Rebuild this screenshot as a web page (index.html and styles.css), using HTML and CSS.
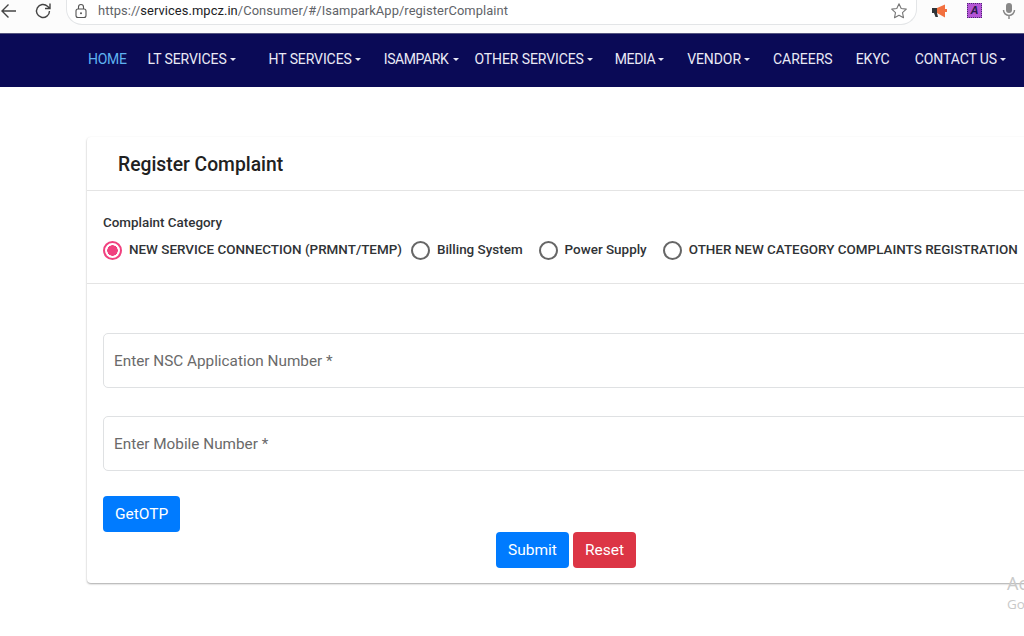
FILE: index.html
```html
<!DOCTYPE html>
<html lang="en">
<head>
<meta charset="utf-8">
<title>Register Complaint</title>
<link rel="stylesheet" href="styles.css">
</head>
<body>
<header class="toolbar">
  <svg class="tool-back" width="20" height="20" viewBox="0 0 20 20"><path d="M17 10H3M9.500 3.500 3 10l6.500 6.500" fill="none" stroke="#444" stroke-width="1.400"/></svg>
  <svg class="tool-reload" width="20" height="20" viewBox="0 0 20 20"><path d="M16.500 10a6.500 6.500 0 1 1-2-4.700L17 7.500M17 2.500v5h-5" fill="none" stroke="#444" stroke-width="1.400"/></svg>
  <div class="omnibox">
    <svg class="lock" width="14" height="16" viewBox="0 0 14 16"><rect x="2" y="6" width="10" height="8.500" rx="2" fill="none" stroke="#555" stroke-width="1.100"/><path d="M4.500 6V4a2.500 2.500 0 0 1 5 0v2" fill="none" stroke="#555" stroke-width="1.100"/><circle cx="7" cy="10.200" r="1" fill="#555"/></svg>
    <span class="url">https://<b>services.mpcz.in</b>/Consumer/#/IsamparkApp/registerComplaint</span>
    <svg class="star" width="18" height="18" viewBox="0 0 18 18"><path d="M9 1.800l2.200 4.700 5.100.6-3.800 3.500 1 5.100L9 13.200l-4.500 2.500 1-5.100-3.800-3.500 5.100-.6z" fill="none" stroke="#777" stroke-width="1.100" stroke-linejoin="round"/></svg>
  </div>
  <svg class="ext-horn" width="18" height="16" viewBox="0 0 18 16"><path d="M1 5h5v5H1z" fill="#2f3438"/><path d="M3 10h3l1 4H4.500z" fill="#2f3438"/><path d="M6 5l8-3.500v13L6 10z" fill="#f2703f"/><rect x="14" y="6" width="2" height="3" fill="#f2703f"/></svg>
  <div class="ext-a">A</div>
  <svg class="ext-mic" width="14" height="18" viewBox="0 0 14 18"><rect x="4" y="1" width="6" height="10" rx="3" fill="#888"/><path d="M1.500 8a5.500 5.500 0 0 0 11 0M7 13.500V17" fill="none" stroke="#888" stroke-width="1.500"/></svg>
</header>

<nav class="navbar">
  <a class="nav-link active">HOME</a>
  <a class="nav-link drop w-lt">LT SERVICES</a>
  <a class="nav-link drop">HT SERVICES</a>
  <a class="nav-link drop w-isam">ISAMPARK</a>
  <a class="nav-link drop">OTHER SERVICES</a>
  <a class="nav-link drop tight">MEDIA</a>
  <a class="nav-link drop">VENDOR</a>
  <a class="nav-link open">CAREERS</a>
  <a class="nav-link open">EKYC</a>
  <a class="nav-link drop w-contact">CONTACT US</a>
</nav>

<main class="card">
  <h1 class="card-title">Register Complaint</h1>
  <section class="category">
    <div class="category-label">Complaint Category</div>
    <div class="radios">
      <label class="radio checked">NEW SERVICE CONNECTION (PRMNT/TEMP)</label>
      <label class="radio">Billing System</label>
      <label class="radio">Power Supply</label>
      <label class="radio">OTHER NEW CATEGORY COMPLAINTS REGISTRATION</label>
    </div>
  </section>
  <form class="form">
    <div class="field">Enter NSC Application Number *</div>
    <div class="field">Enter Mobile Number *</div>
    <div class="otp-row"><button type="button" class="btn blue">GetOTP</button></div>
    <div class="actions">
      <button type="button" class="btn blue">Submit</button>
      <button type="button" class="btn red">Reset</button>
    </div>
  </form>
</main>

<div class="watermark"><div class="wm-1">Activate Windows</div><div class="wm-2">Go to Settings</div></div>
</body>
</html>
```
FILE: styles.css
```css
*, *::before, *::after { box-sizing: border-box; }
html, body { margin: 0; height: 636px; overflow: hidden; background: #fff; }
body { font-family: Roboto, "Liberation Sans", sans-serif; color: #212529; width: 1024px; position: relative; }

.toolbar { height: 33px; display: flex; align-items: flex-start; background: #fcfcfc; }
.tool-back { margin: 1px 0 0 -1px; }
.tool-reload { margin: 1px 0 0 14px; }
.omnibox { width: 851px; height: 25px; margin: 0 0 0 13px; padding: 0 8px 3px 7px; display: flex; align-items: center; border: 1px solid #e3e5e7; border-top: 0; border-radius: 0 0 16px 16px; background: #fff; }
.lock { margin-right: 10px; }
.url { flex: 1; font-size: 12.900px; color: #5f6368; letter-spacing: .07px; white-space: nowrap; }
.url b { font-weight: 400; color: #202124; }
.ext-horn { margin: 3px 0 0 14px; }
.ext-a { width: 15px; height: 15px; margin: 3px 0 0 18px; background: #b455d6; border: 1px dotted #4b2a70; color: #2a1a4a; font: italic 700 11px/13px "Liberation Sans", sans-serif; text-align: center; }
.ext-mic { margin: 2px 0 0 20px; }

.navbar { height: 54px; padding: 0 0 3px 88px; display: flex; align-items: center; gap: 23px; background: #0a0a56; border-top: 1px solid #55557f; }
.nav-link { font-size: 14px; color: #e9e9f5; white-space: nowrap; display: inline-flex; align-items: center; letter-spacing: -.1px; }
.nav-link.active { color: #5fb2f0; margin-right: -2px; letter-spacing: -.3px; }
.drop::after { content: ""; margin-left: 3px; border-top: 3px solid currentColor; border-left: 3px solid transparent; border-right: 3px solid transparent; }
.w-lt { margin-right: 10px; }
.w-isam { margin-right: -8px; letter-spacing: -.4px; }
.w-isam::after { margin-left: 5px; }
.tight { margin-left: -1px; letter-spacing: -.4px; }
.open { letter-spacing: 0; }
.w-contact { margin-left: 2px; }

.card { width: 1100px; height: 446px; margin: 50px 0 0 87px; background: #fff; border-radius: 4px; box-shadow: 0 1px 2px rgba(0,0,0,.35); }
.card-title { margin: 0; height: 54px; padding: 0 0 0 31px; font-size: 19.300px; font-weight: 500; line-height: 55px; color: #212121; border-bottom: 1px solid #e4e4e4; }
.category { height: 93px; padding: 24px 0 0 16px; border-bottom: 1px solid #e4e4e4; }
.category-label { font-size: 13.400px; font-weight: 500; line-height: 16px; color: #303336; }
.radios { display: flex; margin-top: 9px; gap: 16px; }
.radio { display: inline-flex; align-items: center; font-size: 13.450px; font-weight: 500; color: #303336; white-space: nowrap; line-height: 20px; }
.radio.checked { margin-right: -7px; }
.radio::before { content: ""; flex: none; width: 19px; height: 19px; margin-right: 7px; border: 2px solid #666; border-radius: 50%; background: #fff; }
.radio.checked::before { border-color: #f0417f; background: radial-gradient(circle, #f0417f 0 5px, #fff 5.500px); }

.form { padding: 49px 0 0 16px; }
.field { height: 55px; margin-bottom: 28px; padding-left: 10px; border: 1px solid #dfe1e3; border-radius: 5px; font-size: 15.300px; line-height: 55px; color: #6a6a6a; }
.otp-row { margin-top: -3px; height: 36px; }
.btn { height: 36px; padding: 0 12px; border: 0; border-radius: 4px; color: #fff; font: 400 15.500px Roboto, sans-serif; }
.blue { background: #007bff; }
.red { background: #dc3545; }
.actions { display: flex; gap: 4px; padding-left: 393px; }
.watermark { position: absolute; left: 1007px; top: 571px; white-space: nowrap; color: #c9c9c9; font-family: "Open Sans", sans-serif; }
.wm-1 { font-size: 18px; line-height: 24px; }
.wm-2 { font-size: 13.500px; line-height: 18px; }
```
